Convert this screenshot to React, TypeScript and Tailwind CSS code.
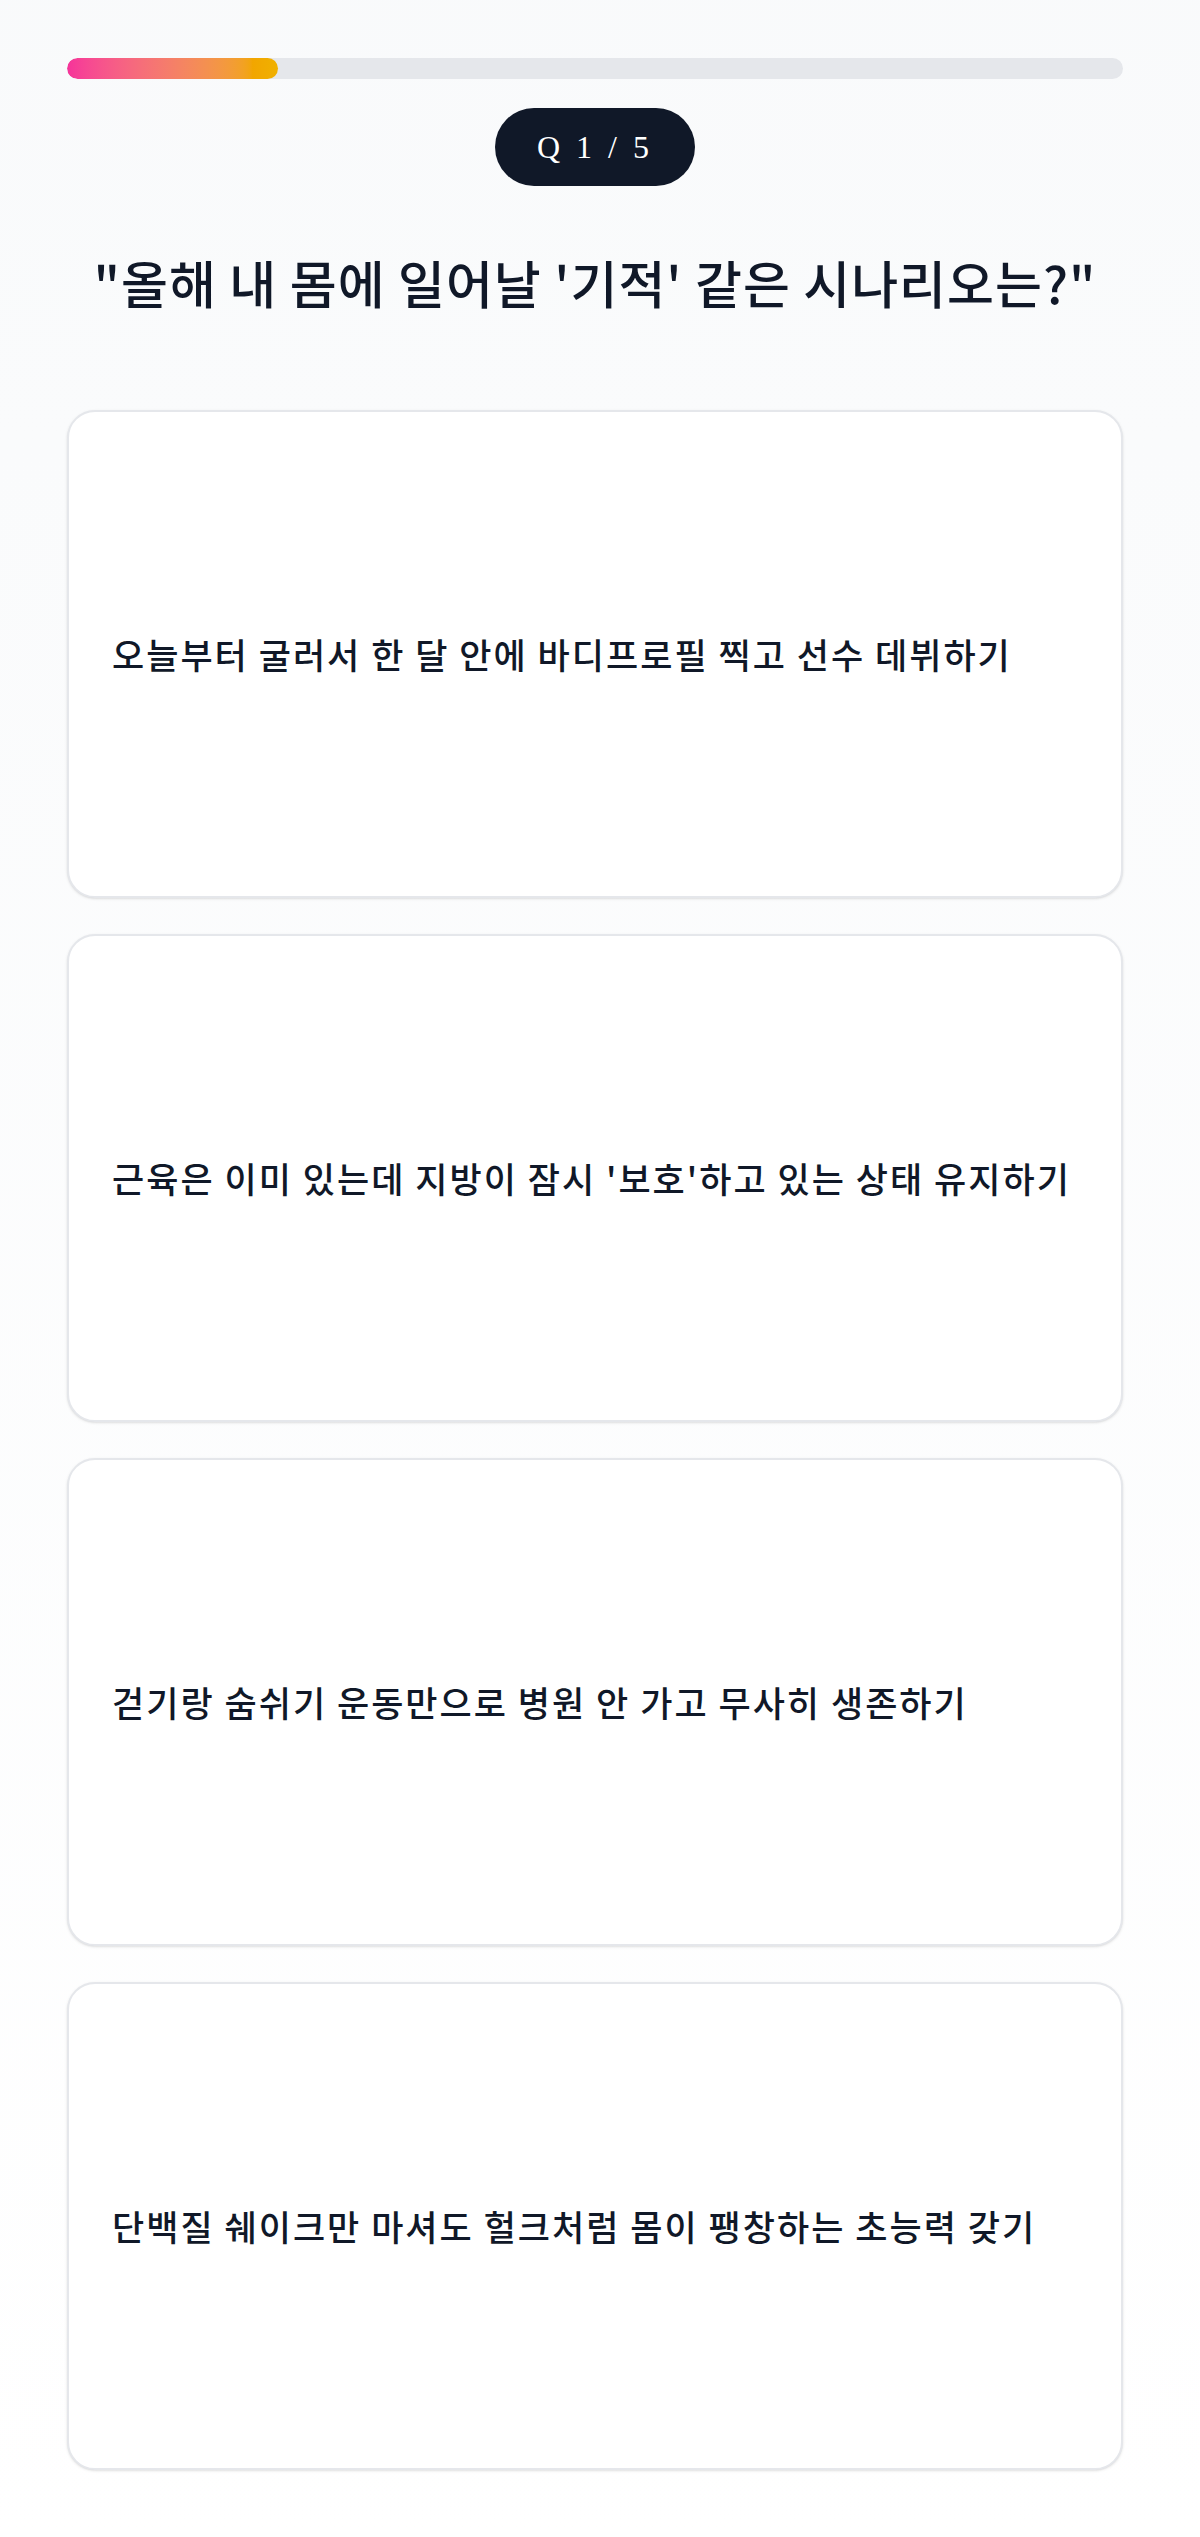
const options = [
  "오늘부터 굴러서 한 달 안에 바디프로필 찍고 선수 데뷔하기",
  "근육은 이미 있는데 지방이 잠시 '보호'하고 있는 상태 유지하기",
  "걷기랑 숨쉬기 운동만으로 병원 안 가고 무사히 생존하기",
  "단백질 쉐이크만 마셔도 헐크처럼 몸이 팽창하는 초능력 갖기",
];

export default function App() {
  const current = 1;
  const total = 5;
  const progress = (current / total) * 100;

  return (
    <div
      className="min-h-screen bg-gradient-to-b from-gray-50 to-white pl-[67px] pr-[77px] pt-[58px] pb-[66px] text-gray-900"
      style={{ fontFamily: '"Noto Sans CJK KR", "Noto Sans", sans-serif' }}
    >
      {/* progress */}
      <div className="h-[21px] w-full overflow-hidden rounded-full bg-gray-200">
        <div
          className="h-full rounded-full bg-gradient-to-r from-pink-500 to-yellow-500"
          style={{ width: `${progress}%` }}
        />
      </div>

      {/* question counter */}
      <div className="mt-[29px] flex justify-center">
        <div
          className="flex h-[78px] w-[200px] items-center justify-center rounded-full bg-gray-900 text-[32px] tracking-[4px] text-white"
          style={{ fontFamily: '"Liberation Serif", serif' }}
        >
          Q {current} / {total}
        </div>
      </div>

      <h1 className="mt-[64px] text-center text-[51px] leading-[65px] font-medium tracking-[1px]">
        "올해 내 몸에 일어날 '기적' 같은 시나리오는?"
      </h1>

      {/* options */}
      <div className="mt-[95px] flex flex-col gap-[36px]">
        {options.map((text) => (
          <button
            key={text}
            className="flex h-[488px] w-full items-center rounded-[28px] border-2 border-gray-200 bg-white px-[43px] text-left text-[35px] font-medium tracking-[2px] shadow-sm"
          >
            {text}
          </button>
        ))}
      </div>
    </div>
  );
}
